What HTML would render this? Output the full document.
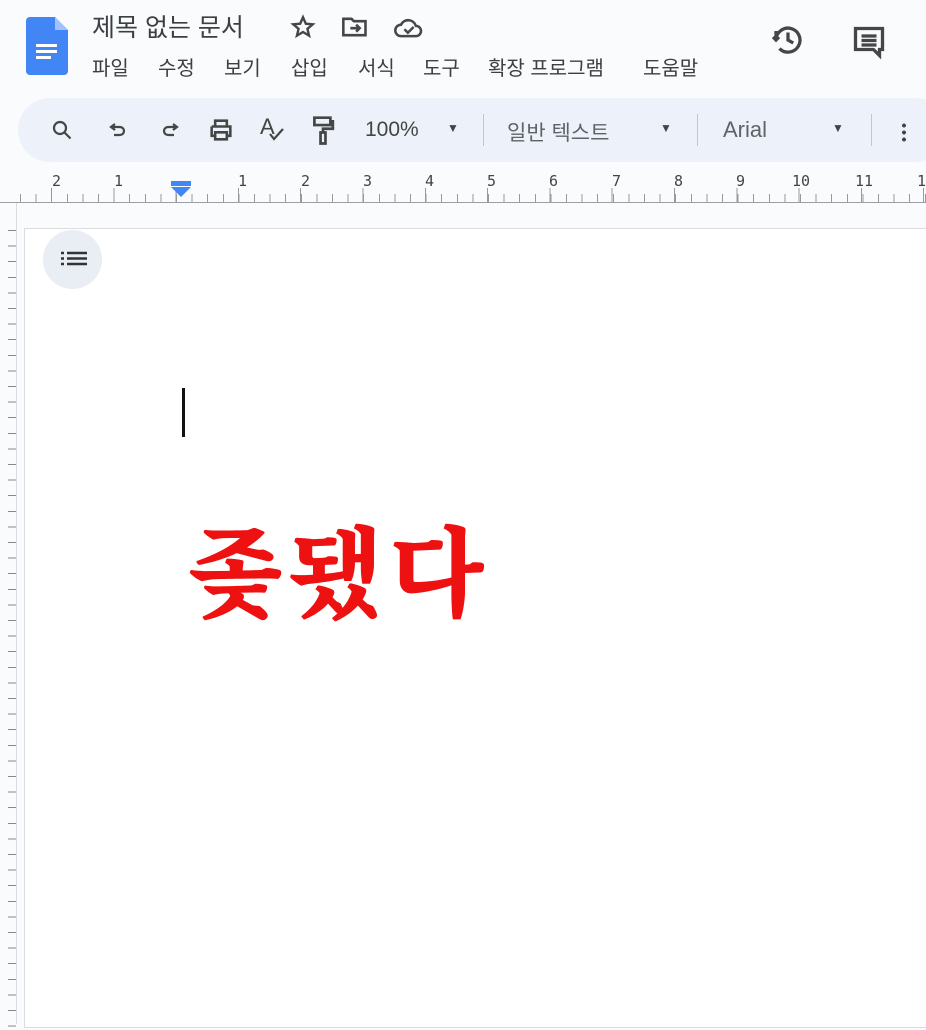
<!DOCTYPE html>
<html><head><meta charset="utf-8"><style>
*{margin:0;padding:0;box-sizing:border-box}
body{width:926px;height:1024px;overflow:hidden;background:#f9fbfd;font-family:"Liberation Sans","Noto Sans CJK KR",sans-serif;position:relative;color:#202124}
.a{position:absolute}
.t{font-size:25px;color:#3c4043;top:8px;left:92px}
.menu{top:52px;font-size:20px;color:#3c4043}
.tb{left:18px;top:98px;width:930px;height:64px;background:#edf2fa;border-radius:32px}
.ico{stroke:#444746;fill:none;stroke-width:2.2}
.sep{width:1px;height:32px;background:#c4c7c5;top:114px}
.rt{top:172px;font-size:15px;color:#444;font-family:"DejaVu Sans Mono",monospace}
</style></head><body>
<svg class="a" style="left:26px;top:17px" width="42" height="58" viewBox="0 0 42 58"><path d="M4 0h25l13 13v41a4 4 0 0 1-4 4H4a4 4 0 0 1-4-4V4a4 4 0 0 1 4-4z" fill="#4285f4"/><path d="M29 0v13h13z" fill="#a1c2fa"/><rect x="10" y="27" width="21" height="3" fill="#fff"/><rect x="10" y="33" width="21" height="3" fill="#fff"/><rect x="10" y="39" width="15" height="3" fill="#fff"/></svg>
<div class="a t">제목 없는 문서</div>
<svg class="a" style="left:290px;top:14px" width="26" height="26" viewBox="0 0 24 24"><path class="ico" d="M12 3l2.6 6 6.4.5-4.9 4.2 1.5 6.3L12 16.6 6.4 20l1.5-6.3L3 9.5l6.4-.5z"/></svg>
<svg class="a" style="left:341px;top:15px" width="28" height="24" viewBox="0 0 24 20"><path class="ico" d="M2 3h7l2 2h10v12H2z M8 11h8 M13 8l3 3-3 3"/></svg>
<svg class="a" style="left:393px;top:14px" width="32" height="26" viewBox="0 0 28 22"><path class="ico" d="M7 19a5 5 0 0 1 0-10 7 7 0 0 1 13 1 4.5 4.5 0 0 1 0 9z M10 13l3 3 5-5"/></svg>
<div class="a menu" style="left:92px">파일</div>
<div class="a menu" style="left:158px">수정</div>
<div class="a menu" style="left:224px">보기</div>
<div class="a menu" style="left:291px">삽입</div>
<div class="a menu" style="left:358px">서식</div>
<div class="a menu" style="left:423px">도구</div>
<div class="a menu" style="left:488px">확장 프로그램</div>
<div class="a menu" style="left:643px">도움말</div>
<svg class="a" style="left:770px;top:22px" width="36" height="36" viewBox="0 0 24 24"><path class="ico" stroke-width="2.4" d="M4 12a8 8 0 1 1 2.3 5.7 M4 6v6h0 M2 10l2 2 2-2 M12 7v5l3.5 2"/></svg>
<svg class="a" style="left:851px;top:24px" width="36" height="36" viewBox="0 0 24 24"><path class="ico" stroke-width="2.4" d="M3 3h18v14h-2v4l-4-4H3z M7 8h10 M7 11h10 M7 14h10"/></svg>
<div class="a tb"></div>
<svg class="a" style="left:50px;top:118px" width="24" height="24" viewBox="0 0 24 24"><circle class="ico" cx="10" cy="10" r="6"/><path class="ico" d="M14.5 14.5l6 6"/></svg>
<svg class="a" style="left:106px;top:118px" width="24" height="24" viewBox="0 0 24 24"><path class="ico" d="M9 6L5 9l4 3 M5 9h9a4 4 0 0 1 0 8H8"/></svg>
<svg class="a" style="left:158px;top:118px" width="24" height="24" viewBox="0 0 24 24"><path class="ico" d="M15 6l4 3-4 3 M19 9h-9a4 4 0 0 0 0 8h6"/></svg>
<svg class="a" style="left:207px;top:116px" width="28" height="28" viewBox="0 0 24 24"><path class="ico" d="M7 4h10v5H7z M4 9h16v8h-3 M7 17H4V9 M7 14h10v6H7z"/></svg>
<div class="a" style="left:260px;top:114px;font-size:22px;color:#444">A</div>
<svg class="a" style="left:268px;top:128px" width="18" height="14" viewBox="0 0 18 14"><path class="ico" d="M2 6l4 5 9-10"/></svg>
<svg class="a" style="left:310px;top:114px" width="26" height="32" viewBox="0 0 20 26"><path class="ico" d="M3 3h13v6H3z M16 6h2v6h-8v3 M8 15h4v9H8z"/></svg>
<div class="a" style="left:365px;top:118px;font-size:21px;color:#444">100%</div>
<div class="a" style="left:447px;top:121px;font-size:12px;color:#444">▼</div>
<div class="a sep" style="left:483px"></div>
<div class="a" style="left:507px;top:117px;font-size:21px;color:#5f6368">일반 텍스트</div>
<div class="a" style="left:660px;top:121px;font-size:12px;color:#444">▼</div>
<div class="a sep" style="left:697px"></div>
<div class="a" style="left:723px;top:117px;font-size:22px;color:#5f6368">Arial</div>
<div class="a" style="left:832px;top:121px;font-size:12px;color:#444">▼</div>
<div class="a sep" style="left:871px"></div>
<div class="a" style="left:902px;top:122px;width:4px;height:20px;background:radial-gradient(circle,#444 1.8px,transparent 2.2px) 0 0/4px 7px"></div>
<div class="a" style="left:20px;top:194px;width:906px;height:8px;background:repeating-linear-gradient(90deg,#999 0 1px,transparent 1px 15.6px)"></div>
<div class="a" style="left:20px;top:188px;width:906px;height:14px;background:repeating-linear-gradient(90deg,transparent 0 31px,#999 31px 32px,transparent 32px 62.3px)"></div>
<div class="a" style="left:0;top:202px;width:926px;height:1px;background:#9aa0a6"></div>
<div class="a rt" style="left:52px">2</div><div class="a rt" style="left:114px">1</div>
<div class="a rt" style="left:238px">1</div><div class="a rt" style="left:301px">2</div><div class="a rt" style="left:363px">3</div><div class="a rt" style="left:425px">4</div><div class="a rt" style="left:487px">5</div><div class="a rt" style="left:549px">6</div><div class="a rt" style="left:612px">7</div><div class="a rt" style="left:674px">8</div><div class="a rt" style="left:736px">9</div><div class="a rt" style="left:792px">10</div><div class="a rt" style="left:855px">11</div><div class="a rt" style="left:917px">1</div>
<div class="a" style="left:171px;top:181px;width:20px;height:5px;background:#4285f4"></div>
<svg class="a" style="left:171px;top:187px" width="20" height="10"><path d="M0 0h20L10 10z" fill="#4285f4"/></svg>
<div class="a" style="left:0;top:230px;width:16px;height:800px;background:repeating-linear-gradient(180deg,#888 0 1px,transparent 1px 15.6px) 8px 0/8px 100% no-repeat"></div>
<div class="a" style="left:16px;top:203px;width:1px;height:821px;background:#dadce0"></div>
<div class="a" style="left:24px;top:228px;width:910px;height:800px;background:#fff;border:1px solid #dadce0"></div>
<div class="a" style="left:43px;top:230px;width:59px;height:59px;border-radius:50%;background:#e9edf4"></div>
<svg class="a" style="left:61px;top:250px" width="26" height="18" viewBox="0 0 26 18"><path d="M0 3h3M0 8.5h3M0 14h3M6 3h20M6 8.5h20M6 14h20" stroke="#333" stroke-width="2.4"/></svg>
<div class="a" style="left:182px;top:388px;width:3px;height:49px;background:#111"></div>
<div class="a" style="left:188px;top:508px;font-family:'Noto Serif CJK SC','Noto Sans CJK KR',serif;font-weight:900;font-size:98px;line-height:1.2;color:#ee1111;letter-spacing:6px">좆됐다</div>
</body></html>
